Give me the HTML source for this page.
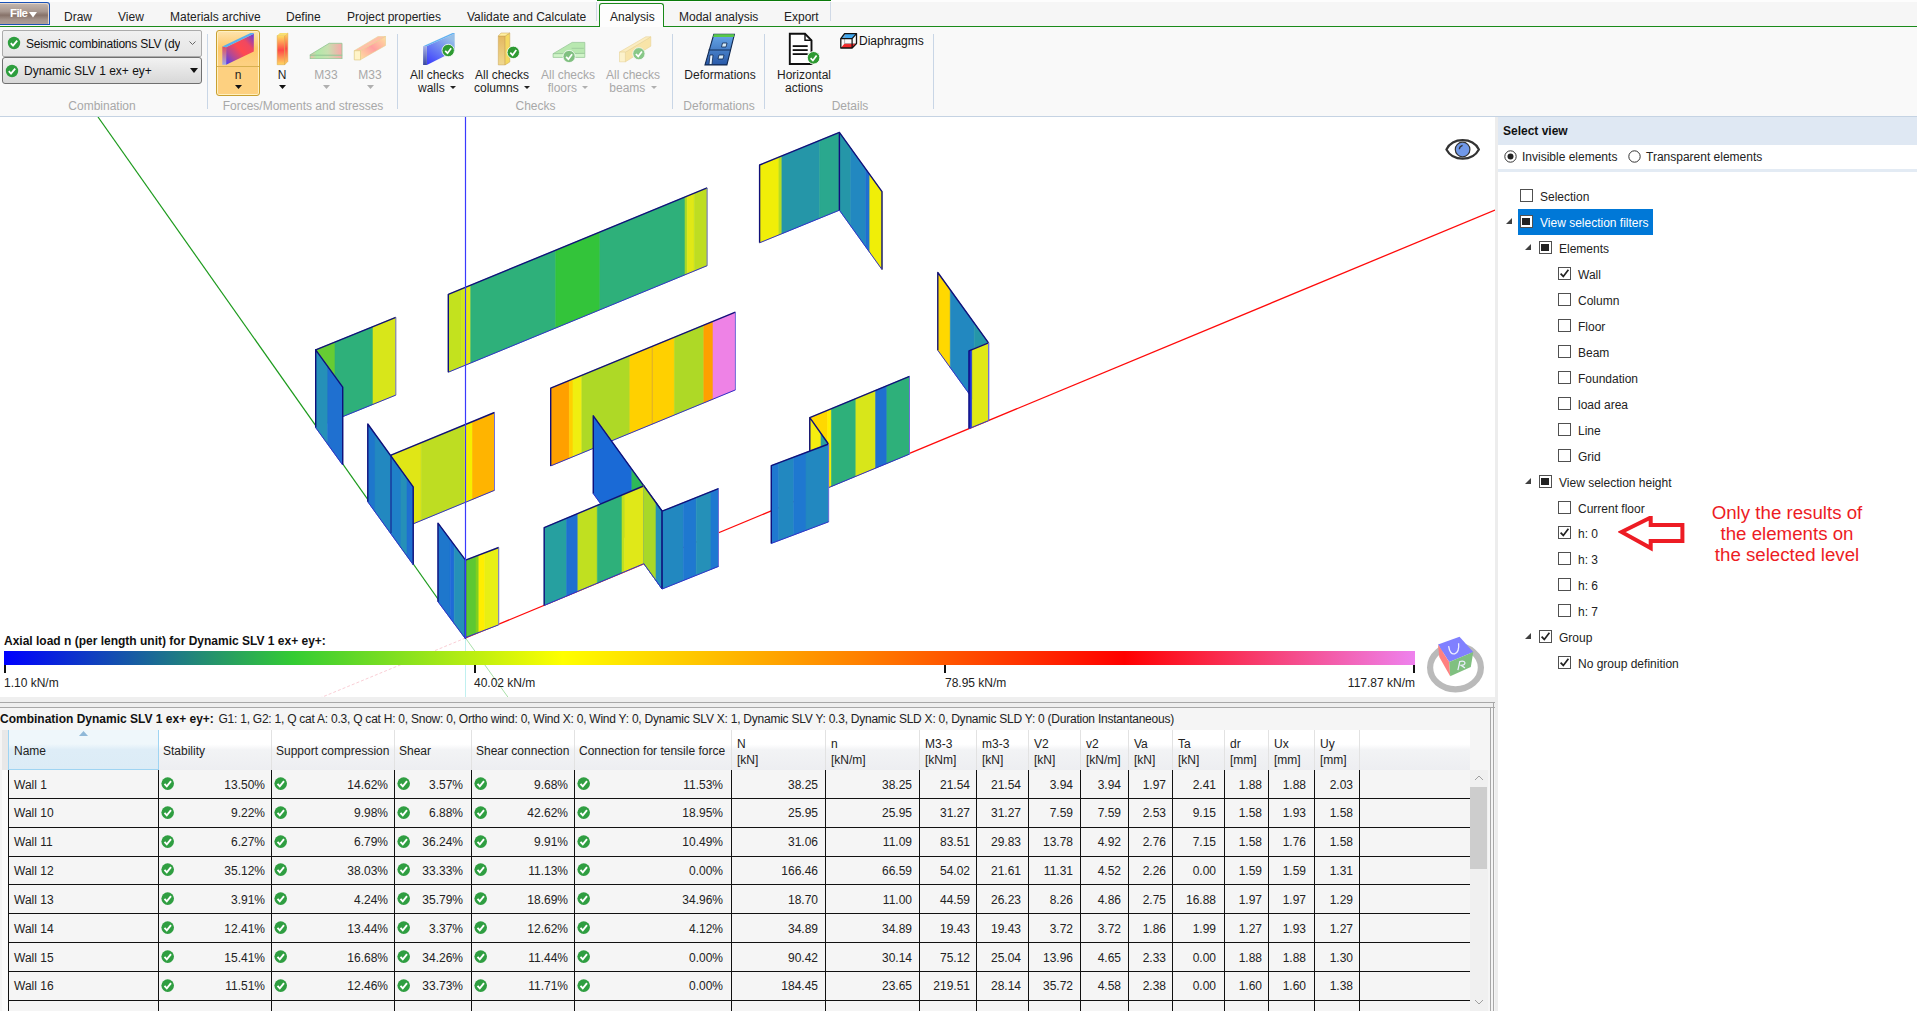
<!DOCTYPE html>
<html><head><meta charset="utf-8">
<style>
*{box-sizing:border-box;margin:0;padding:0}
html,body{width:1917px;height:1011px;overflow:hidden;background:#fff;font-family:"Liberation Sans",sans-serif;font-size:12px;color:#1e1e1e}
.a{position:absolute;white-space:nowrap}
#tabs{position:absolute;left:0;top:0;width:1917px;height:27px;background:#f6f6f6}
#ribbon{position:absolute;left:0;top:27px;width:1917px;height:90px;background:#f9f9f9;border-bottom:1px solid #c5d3e3}
.tab{position:absolute;top:10px;font-size:12px;color:#222}
.sep{position:absolute;width:1px;background:#c9d6e6}
.glabel{position:absolute;top:99px;font-size:12px;color:#a8a8a8;text-align:center}
.btxt{position:absolute;font-size:12px;text-align:center;line-height:13px;color:#1e1e1e}
.dis{color:#a8a8a8}
.arr{display:inline-block;width:0;height:0;border-left:3px solid transparent;border-right:3px solid transparent;border-top:3px solid #222;vertical-align:middle;margin-left:2px}
#view{position:absolute;left:0;top:117px;width:1495px;height:580px;background:#fff;overflow:hidden}
#split{position:absolute;left:1495px;top:117px;width:3px;height:894px;background:#ededed}
#panel{position:absolute;left:1498px;top:117px;width:419px;height:894px;background:#fff}
#tbl{position:absolute;left:0;top:697px;width:1495px;height:314px;background:#efefef}
.cb{position:absolute;width:13px;height:13px;border:1px solid #333;background:#fff}
.tri{position:absolute;width:0;height:0;border-left:7px solid transparent;border-bottom:7px solid #444}
</style></head><body>
<div id="tabs">
  <div class="a" style="left:0;top:0;width:1917px;height:2px;background:#fdfdfd"></div>
  <div class="a" style="left:0;top:2px;width:50px;height:23px;border:1px solid #1a52b8;border-left:none;border-radius:0 3px 0 0;background:linear-gradient(#c6b8b0 0%,#a89890 40%,#87736a 58%,#a4948c 80%,#b0a098 100%);box-shadow:inset -1px 1px 0 #e6d8cc"></div>
  <div class="a" style="left:10px;top:7px;font-size:11.5px;font-weight:bold;color:#fff;letter-spacing:-0.6px">File</div>
  <svg class="a" style="left:29px;top:12px" width="8" height="6"><path d="M0 0 L8 0 L4 5.5z" fill="#fff"/></svg>
  <div class="tab" style="left:64px">Draw</div>
  <div class="tab" style="left:118px">View</div>
  <div class="tab" style="left:170px">Materials archive</div>
  <div class="tab" style="left:286px">Define</div>
  <div class="tab" style="left:347px">Project properties</div>
  <div class="tab" style="left:467px">Validate and Calculate</div>
  <div class="a" style="left:597px;top:0;width:234px;height:1px;background:#0a7a0a"></div>
  <div class="a" style="left:596px;top:2px;width:1px;height:19px;background:#d0d9e6"></div>
  <div class="a" style="left:830px;top:2px;width:1px;height:19px;background:#d0d9e6"></div>
  <div class="a" style="left:599px;top:3px;width:65px;height:25px;background:#fdfdfd;border:1px solid #1a8a1a;border-bottom:none;border-radius:3px 3px 0 0"></div>
  <div class="tab" style="left:610px">Analysis</div>
  <div class="tab" style="left:679px">Modal analysis</div>
  <div class="tab" style="left:784px">Export</div>
  <div class="a" style="left:0;top:26px;width:599px;height:1px;background:#1a8a1a"></div>
  <div class="a" style="left:663px;top:26px;width:1254px;height:1px;background:#1a8a1a"></div>
</div>
<div id="ribbon">
  <!-- combination dropdowns -->
  <div class="a" style="left:2px;top:3px;width:200px;height:27px;border:1px solid #ababab;border-radius:2px;background:linear-gradient(#f0f0f0,#e5e5e5)"></div>
  <div class="a" style="left:2px;top:30px;width:200px;height:27px;border:1px solid #707070;border-radius:3px;background:linear-gradient(#f2f2f2,#d8d8d8)"></div>
  <svg class="a" style="left:7px;top:9px" width="14" height="14"><circle cx="7" cy="7" r="6.2" fill="#2e9e3e"/><path d="M3.8 7.2 L6 9.6 L10.2 4.6" stroke="#fff" stroke-width="1.8" fill="none"/></svg>
  <div class="a" style="left:26px;top:10px;width:154px;overflow:hidden;font-size:12px;letter-spacing:-0.25px;color:#111">Seismic combinations SLV (dy</div>
  <svg class="a" style="left:189px;top:14px" width="7" height="5"><path d="M0.5 0.5 L3.5 3.5 L6.5 0.5" stroke="#666" fill="none"/></svg>
  <svg class="a" style="left:5px;top:37px" width="14" height="14"><circle cx="7" cy="7" r="6.2" fill="#2e9e3e"/><path d="M3.8 7.2 L6 9.6 L10.2 4.6" stroke="#fff" stroke-width="1.8" fill="none"/></svg>
  <div class="a" style="left:24px;top:37px;font-size:12px;color:#111">Dynamic SLV 1 ex+ ey+</div>
  <svg class="a" style="left:190px;top:41px" width="8" height="5"><path d="M0 0 L8 0 L4 5z" fill="#111"/></svg>
  <div class="glabel" style="left:2px;top:72px;width:200px">Combination</div>
  <div class="sep" style="left:207px;top:7px;height:75px"></div>

  <!-- n button -->
  <div class="a" style="left:216px;top:3px;width:44px;height:66px;border:1px solid #c9a030;border-radius:3px;box-shadow:inset 0 0 0 1px #fff0c0;background:linear-gradient(#fde4b0 0%,#fec868 27%,#fdd080 50%,#fdd080 100%)"></div>
  <div class="a" style="left:217px;top:39px;width:42px;height:1px;background:#d8b050"></div>
  <svg class="a" style="left:221px;top:5px" width="34" height="34">
    <defs><linearGradient id="gn" x1="0" y1="1" x2="1" y2="0"><stop offset="0" stop-color="#4a3cf8"/><stop offset="0.25" stop-color="#b04898"/><stop offset="0.5" stop-color="#ff4850"/><stop offset="0.72" stop-color="#f04860"/><stop offset="1" stop-color="#5a3ce8"/></linearGradient>
    <linearGradient id="gnl" x1="0" y1="0" x2="0" y2="1"><stop offset="0" stop-color="#e05060"/><stop offset="1" stop-color="#a0a8e8"/></linearGradient></defs>
    <polygon points="5.1,15.2 32.8,1.8 32.8,19.4 5.1,32.7" fill="url(#gn)"/>
    <polygon points="1.3,14.4 5.1,15.2 5.1,32.7 1.3,32.7" fill="url(#gnl)"/>
    <polygon points="1.3,14.4 29.5,1 32.8,1 32.8,1.8 5.1,15.2" fill="#58b0f0"/>
  </svg>
  <div class="btxt" style="left:216px;top:42px;width:44px">n</div>
  <svg class="a" style="left:235px;top:58px" width="7" height="4"><path d="M0 0 L7 0 L3.5 4z" fill="#111"/></svg>
  <!-- N -->
  <svg class="a" style="left:276px;top:5px" width="14" height="34">
    <defs><linearGradient id="gN" x1="0" y1="0" x2="0" y2="1"><stop offset="0" stop-color="#ffe060"/><stop offset="0.5" stop-color="#ff4848"/><stop offset="1" stop-color="#ffd860"/></linearGradient></defs>
    <polygon points="1.2,3.5 8.7,3.5 8.7,32.7 1.2,32.7" fill="url(#gN)" stroke="#d8a040" stroke-width="0.5"/>
    <polygon points="8.7,3.5 11.8,1 11.8,29.5 8.7,32.7" fill="url(#gN)" stroke="#d8a040" stroke-width="0.5"/>
    <polygon points="1.2,3.5 4,1 11.8,1 8.7,3.5" fill="#f8e070"/>
  </svg>
  <div class="btxt" style="left:262px;top:42px;width:40px">N</div>
  <svg class="a" style="left:279px;top:58px" width="7" height="4"><path d="M0 0 L7 0 L3.5 4z" fill="#111"/></svg>
  <!-- M33 slab -->
  <svg class="a" style="left:309px;top:14px" width="34" height="18">
    <defs><linearGradient id="gm1" x1="0" y1="0" x2="1" y2="0"><stop offset="0" stop-color="#f0b8a8"/><stop offset="0.2" stop-color="#b0e8a8"/><stop offset="0.55" stop-color="#c8e0b0"/><stop offset="1" stop-color="#f8a8a8"/></linearGradient></defs>
    <polygon points="1.2,13.8 20.2,2.3 33,2.3 33,14.3 1.2,14.3" fill="url(#gm1)" stroke="#98c898" stroke-width="0.9"/>
    <rect x="1.2" y="14.3" width="31.8" height="3.4" fill="url(#gm1)" stroke="#98c898" stroke-width="0.9"/>
  </svg>
  <div class="btxt dis" style="left:306px;top:42px;width:40px">M33</div>
  <svg class="a" style="left:323px;top:58px" width="7" height="4"><path d="M0 0 L7 0 L3.5 4z" fill="#b0b0b0"/></svg>
  <!-- M33 beam -->
  <svg class="a" style="left:353px;top:9px" width="34" height="26">
    <defs><linearGradient id="gm2" x1="0" y1="1" x2="1" y2="0"><stop offset="0" stop-color="#ffe0a0"/><stop offset="0.5" stop-color="#ffa0a0"/><stop offset="1" stop-color="#ffe0a0"/></linearGradient></defs>
    <polygon points="7.5,23.7 32.5,9.5 32.5,0.4 7.5,14.7" fill="url(#gm2)" stroke="#e8d090" stroke-width="0.6"/>
    <polygon points="1.3,14.7 25.2,0.4 32.5,0.4 7.5,14.7" fill="#ffc0a8" stroke="#e8d090" stroke-width="0.6"/>
    <polygon points="1.3,14.7 7.5,14.7 7.5,23.9 1.3,23.9" fill="#fff4c8" stroke="#e0c880" stroke-width="0.7"/>
  </svg>
  <div class="btxt dis" style="left:350px;top:42px;width:40px">M33</div>
  <svg class="a" style="left:367px;top:58px" width="7" height="4"><path d="M0 0 L7 0 L3.5 4z" fill="#b0b0b0"/></svg>
  <div class="glabel" style="left:208px;top:72px;width:190px">Forces/Moments and stresses</div>
  <div class="sep" style="left:397px;top:7px;height:75px"></div>

  <!-- checks -->
  <svg class="a" style="left:422px;top:5px" width="36" height="34">
    <defs><linearGradient id="gw" x1="0" y1="1" x2="0.6" y2="0"><stop offset="0" stop-color="#3838ff"/><stop offset="1" stop-color="#98c0e8"/></linearGradient>
    <linearGradient id="gwl" x1="0" y1="0" x2="0" y2="1"><stop offset="0" stop-color="#a8b0e8"/><stop offset="1" stop-color="#3848a0"/></linearGradient></defs>
    <polygon points="4.9,14 32.7,1.6 32.7,19 4.9,32.9" fill="url(#gw)"/>
    <polygon points="1.1,14.2 4.9,14 4.9,32.9 1.1,32.9" fill="url(#gwl)"/>
    <polygon points="1.1,14.2 30.5,1 32.7,1 32.7,1.6 4.9,14" fill="#60b0f0"/>
    <circle cx="26.2" cy="18.5" r="6.2" fill="#2e9a32" stroke="#fff" stroke-width="0.8"/><path d="M23.2 18.8 L25.5 21.2 L29.2 16.2" stroke="#fff" stroke-width="1.7" fill="none"/>
  </svg>
  <div class="btxt" style="left:405px;top:42px;width:64px">All checks<br>walls <span class="arr" style="margin-top:-2px"></span></div>
  <svg class="a" style="left:496px;top:5px" width="30" height="34">
    <defs><linearGradient id="gc" x1="0" y1="0" x2="0" y2="1"><stop offset="0" stop-color="#e4b860"/><stop offset="1" stop-color="#f0d890"/></linearGradient></defs>
    <polygon points="2.3,4 9.1,4 9.1,32.9 2.3,32.9" fill="url(#gc)" stroke="#c8a050" stroke-width="0.5"/>
    <polygon points="9.1,4 13.8,1 13.8,30 9.1,32.9" fill="#f4d860" stroke="#c8a050" stroke-width="0.5"/>
    <polygon points="2.3,4 5,1 13.8,1 9.1,4" fill="#fff0a0" stroke="#c8a050" stroke-width="0.5"/>
    <circle cx="17.3" cy="20.4" r="6.2" fill="#2e9a32" stroke="#fff" stroke-width="0.8"/><path d="M14.3 20.7 L16.6 23.1 L20.3 18.1" stroke="#fff" stroke-width="1.7" fill="none"/>
  </svg>
  <div class="btxt" style="left:470px;top:42px;width:64px">All checks<br>columns <span class="arr" style="margin-top:-2px"></span></div>
  <svg class="a" style="left:552px;top:5px" width="36" height="34">
    <polygon points="1.1,21.7 20.2,10.4 32.8,10.4 32.8,21.4" fill="#b8e8b0" stroke="#98c898" stroke-width="0.8"/>
    <polygon points="1.1,21.7 32.8,21.4 32.8,25.4 1.1,25.4" fill="#d0f4c8" stroke="#98c898" stroke-width="0.8"/>
    <line x1="19.6" y1="16.3" x2="31.8" y2="16.3" stroke="#98c098" stroke-width="0.7"/>
    <circle cx="17.1" cy="24.5" r="6.1" fill="#80c080" stroke="#f8f8f8" stroke-width="0.8"/><path d="M14.1 24.8 L16.4 27.2 L20.1 22.2" stroke="#fff" stroke-width="1.7" fill="none"/>
  </svg>
  <div class="btxt dis" style="left:536px;top:42px;width:64px">All checks<br>floors <span class="arr" style="margin-top:-2px;border-top-color:#b0b0b0"></span></div>
  <svg class="a" style="left:617px;top:5px" width="36" height="34">
    <polygon points="8.4,20.1 33.8,4.8 33.8,14.2 8.4,29.8" fill="#f8e4a8" stroke="#e8d498" stroke-width="0.6"/>
    <polygon points="2.5,20.1 28.8,4.8 33.8,4.8 8.4,20.1" fill="#fbecc0" stroke="#e8d498" stroke-width="0.6"/>
    <polygon points="2.5,20.1 8.4,20.1 8.4,29.8 2.5,29.8" fill="#fcf2cc" stroke="#e8d498" stroke-width="0.6"/>
    <circle cx="21.9" cy="21.7" r="6.1" fill="#88c888" stroke="#f8f8f8" stroke-width="0.8"/><path d="M18.9 22 L21.2 24.4 L24.9 19.4" stroke="#fff" stroke-width="1.7" fill="none"/>
  </svg>
  <div class="btxt dis" style="left:601px;top:42px;width:64px">All checks<br>beams <span class="arr" style="margin-top:-2px;border-top-color:#b0b0b0"></span></div>
  <div class="glabel" style="left:398px;top:72px;width:275px">Checks</div>
  <div class="sep" style="left:672px;top:7px;height:75px"></div>

  <!-- deformations -->
  <svg class="a" style="left:704px;top:5px" width="34" height="34">
    <defs><linearGradient id="gd" x1="0" y1="0" x2="0" y2="1"><stop offset="0" stop-color="#68a8e8"/><stop offset="1" stop-color="#2858a8"/></linearGradient></defs>
    <polygon points="9.8,2.3 30.4,2.3 22.9,32.9 1,32.9" fill="url(#gd)" stroke="#102850" stroke-width="1.1"/>
    <polygon points="9.8,2.3 30.4,2.3 29.7,5 9.1,5" fill="#58c848"/>
    <line x1="4.5" y1="18" x2="27" y2="18" stroke="#102850" stroke-width="0.9"/>
    <polygon points="18.5,11 23,11 22,15 17.5,15" fill="#d8ecf8" stroke="#102850" stroke-width="0.8"/>
    <polygon points="15,23 20,23 19,27 14,27" fill="#d8ecf8" stroke="#102850" stroke-width="0.8"/>
    <polygon points="6,23 9,23 8,32.5 5,32.5" fill="#e8f4ff" stroke="#102850" stroke-width="0.8"/>
  </svg>
  <div class="btxt" style="left:680px;top:42px;width:80px">Deformations</div>
  <div class="glabel" style="left:673px;top:72px;width:92px">Deformations</div>
  <div class="sep" style="left:764px;top:7px;height:75px"></div>

  <!-- horizontal actions -->
  <svg class="a" style="left:788px;top:5px" width="34" height="34">
    <path d="M1.8 1.8 L17 1.8 L23.5 8.3 L23.5 32 L1.8 32 Z" fill="#fff" stroke="#111" stroke-width="1.9"/>
    <path d="M17 1.8 L17 8.3 L23.5 8.3" fill="none" stroke="#111" stroke-width="1.4"/>
    <rect x="4.7" y="13.2" width="15" height="1.8" fill="#111"/><rect x="4.7" y="17.2" width="15" height="1.8" fill="#111"/><rect x="4.7" y="21.2" width="15" height="1.8" fill="#111"/>
    <circle cx="25.6" cy="25.8" r="6.3" fill="#2e9a32" stroke="#fff" stroke-width="0.9"/><path d="M22.6 26.1 L24.9 28.5 L28.6 23.5" stroke="#fff" stroke-width="1.7" fill="none"/>
  </svg>
  <div class="btxt" style="left:770px;top:42px;width:68px">Horizontal<br>actions</div>
  <svg class="a" style="left:839px;top:5px" width="20" height="18">
    <polygon points="5.6,1.6 17.5,1.6 13.1,6.6 1.8,6.6" fill="#40a8f0"/>
    <polygon points="5.6,11.6 17.5,11.6 13.1,16 1.8,16" fill="#f02828"/>
    <line x1="5.6" y1="1.6" x2="5.6" y2="11.6" stroke="#a0a0a0" stroke-width="0.8"/>
    <line x1="5.6" y1="11.6" x2="17.5" y2="11.6" stroke="#a0a0a0" stroke-width="0.8"/>
    <path d="M1.8 6.6 L5.6 1.6 L17.5 1.6 L17.5 11.6 L13.1 16 L1.8 16 Z" fill="none" stroke="#111" stroke-width="1.3" stroke-linejoin="round"/>
    <path d="M1.8 6.6 L13.1 6.6 L17.5 1.6 M13.1 6.6 L13.1 16" fill="none" stroke="#111" stroke-width="1.2"/>
  </svg>
  <div class="a" style="left:859px;top:7px;font-size:12px;color:#111">Diaphragms</div>
  <div class="glabel" style="left:765px;top:72px;width:170px">Details</div>
  <div class="sep" style="left:933px;top:7px;height:75px"></div>
</div>
<div id="view">
<svg class="a" style="left:0;top:0" width="1495" height="580">
<line x1="98" y1="0" x2="465.5" y2="521.0" stroke="#1c9a1c" stroke-width="1.2"/>
<line x1="465.5" y1="521.0" x2="1495" y2="93.0" stroke="#ff0a0a" stroke-width="1.3"/>
<line x1="465.5" y1="521.0" x2="510" y2="583.0" stroke="#a8e0a8" stroke-width="1"/>
<line x1="465.5" y1="521.0" x2="320" y2="581.0" stroke="#f8c8d0" stroke-width="0.9" stroke-dasharray="3,2"/>
<line x1="465.5" y1="521.0" x2="465.5" y2="583.0" stroke="#c0f0f0" stroke-width="1"/>
<polygon points="759.6,48.0 778.9,40.1 778.9,117.9 759.6,125.8" fill="#f0ee08" stroke="#f0ee08" stroke-width="0.6"/>
<polygon points="778.9,40.1 781.9,38.9 781.9,116.7 778.9,117.9" fill="#b4dc24" stroke="#b4dc24" stroke-width="0.6"/>
<polygon points="781.9,38.9 819.7,23.4 819.7,101.2 781.9,116.7" fill="#2596a8" stroke="#2596a8" stroke-width="0.6"/>
<polygon points="819.7,23.4 839.4,15.4 839.4,93.2 819.7,101.2" fill="#2aa88e" stroke="#2aa88e" stroke-width="0.6"/>
<polyline points="759.6,125.8 759.6,48.0 839.4,15.4" fill="none" stroke="#10107a" stroke-width="1.4" stroke-linejoin="round"/>
<line x1="839.4" y1="15.4" x2="839.4" y2="93.2" stroke="#7070d8" stroke-width="1"/>
<line x1="759.6" y1="125.8" x2="839.4" y2="93.2" stroke="#3030c8" stroke-width="1"/>
<polygon points="839.4,15.4 850.8,31.3 850.8,109.1 839.4,93.2" fill="#2596a8" stroke="#2596a8" stroke-width="0.6"/>
<polygon points="850.8,31.3 865.7,52.0 865.7,129.8 850.8,109.1" fill="#2288c0" stroke="#2288c0" stroke-width="0.6"/>
<polygon points="865.7,52.0 869.8,57.7 869.8,135.5 865.7,129.8" fill="#1f70d0" stroke="#1f70d0" stroke-width="0.6"/>
<polygon points="869.8,57.7 882.0,74.7 882.0,152.5 869.8,135.5" fill="#f0ee08" stroke="#f0ee08" stroke-width="0.6"/>
<polyline points="839.4,93.2 839.4,15.4 882.0,74.7 882.0,152.5" fill="none" stroke="#10107a" stroke-width="1.4" stroke-linejoin="round"/>
<line x1="839.4" y1="93.2" x2="882.0" y2="152.5" stroke="#3030c8" stroke-width="1"/>
<polygon points="448.3,177.4 461.8,171.8 461.8,249.6 448.3,255.2" fill="#c3e21e" stroke="#c3e21e" stroke-width="0.6"/>
<polygon points="461.8,171.8 464.7,170.7 464.7,248.5 461.8,249.6" fill="#d0e818" stroke="#d0e818" stroke-width="0.6"/>
<polygon points="464.7,170.7 470.7,168.2 470.7,246.0 464.7,248.5" fill="#e3e812" stroke="#e3e812" stroke-width="0.6"/>
<polygon points="470.7,168.2 555.7,133.2 555.7,211.0 470.7,246.0" fill="#2eb07a" stroke="#2eb07a" stroke-width="0.6"/>
<polygon points="555.7,133.2 599.9,115.0 599.9,192.8 555.7,211.0" fill="#33c43a" stroke="#33c43a" stroke-width="0.6"/>
<polygon points="599.9,115.0 685.0,80.0 685.0,157.8 599.9,192.8" fill="#2eb07a" stroke="#2eb07a" stroke-width="0.6"/>
<polygon points="685.0,80.0 687.3,79.0 687.3,156.8 685.0,157.8" fill="#a8d828" stroke="#a8d828" stroke-width="0.6"/>
<polygon points="687.3,79.0 694.3,76.2 694.3,154.0 687.3,156.8" fill="#e0e816" stroke="#e0e816" stroke-width="0.6"/>
<polygon points="694.3,76.2 707.1,70.9 707.1,148.7 694.3,154.0" fill="#bedd22" stroke="#bedd22" stroke-width="0.6"/>
<polyline points="448.3,255.2 448.3,177.4 707.1,70.9" fill="none" stroke="#10107a" stroke-width="1.4" stroke-linejoin="round"/>
<line x1="707.1" y1="70.9" x2="707.1" y2="148.7" stroke="#7070d8" stroke-width="1"/>
<line x1="448.3" y1="255.2" x2="707.1" y2="148.7" stroke="#3030c8" stroke-width="1"/>
<polygon points="315.7,232.8 335.0,225.0 335.0,302.8 315.7,310.6" fill="#66cc33" stroke="#66cc33" stroke-width="0.6"/>
<polygon points="335.0,225.0 373.0,209.6 373.0,287.4 335.0,302.8" fill="#2eb07a" stroke="#2eb07a" stroke-width="0.6"/>
<polygon points="373.0,209.6 395.8,200.3 395.8,278.1 373.0,287.4" fill="#d8e61a" stroke="#d8e61a" stroke-width="0.6"/>
<polyline points="315.7,310.6 315.7,232.8 395.8,200.3" fill="none" stroke="#10107a" stroke-width="1.4" stroke-linejoin="round"/>
<line x1="395.8" y1="200.3" x2="395.8" y2="278.1" stroke="#7070d8" stroke-width="1"/>
<line x1="315.7" y1="310.6" x2="395.8" y2="278.1" stroke="#3030c8" stroke-width="1"/>
<polygon points="315.7,232.8 327.6,249.3 327.6,327.1 315.7,310.6" fill="#2590b8" stroke="#2590b8" stroke-width="0.6"/>
<polygon points="327.6,249.3 342.7,270.2 342.7,348.0 327.6,327.1" fill="#1f70d0" stroke="#1f70d0" stroke-width="0.6"/>
<polyline points="315.7,310.6 315.7,232.8 342.7,270.2 342.7,348.0" fill="none" stroke="#10107a" stroke-width="1.4" stroke-linejoin="round"/>
<line x1="315.7" y1="310.6" x2="342.7" y2="348.0" stroke="#3030c8" stroke-width="1"/>
<polygon points="937.8,155.5 950.3,172.8 950.3,250.6 937.8,233.3" fill="#ffd800" stroke="#ffd800" stroke-width="0.6"/>
<polygon points="950.3,172.8 974.3,206.1 974.3,283.9 950.3,250.6" fill="#2288c0" stroke="#2288c0" stroke-width="0.6"/>
<polygon points="974.3,206.1 988.5,225.8 988.5,303.6 974.3,283.9" fill="#2596a8" stroke="#2596a8" stroke-width="0.6"/>
<polyline points="937.8,233.3 937.8,155.5 988.5,225.8 988.5,303.6" fill="none" stroke="#10107a" stroke-width="1.4" stroke-linejoin="round"/>
<line x1="937.8" y1="233.3" x2="988.5" y2="303.6" stroke="#3030c8" stroke-width="1"/>
<polygon points="969.0,233.8 972.2,232.5 972.2,310.3 969.0,311.6" fill="#1a30e0" stroke="#1a30e0" stroke-width="0.6"/>
<polygon points="972.2,232.5 988.5,225.8 988.5,303.6 972.2,310.3" fill="#e0e816" stroke="#e0e816" stroke-width="0.6"/>
<polyline points="969.0,311.6 969.0,233.8 988.5,225.8" fill="none" stroke="#10107a" stroke-width="1.4" stroke-linejoin="round"/>
<line x1="988.5" y1="225.8" x2="988.5" y2="303.6" stroke="#7070d8" stroke-width="1"/>
<line x1="969.0" y1="311.6" x2="988.5" y2="303.6" stroke="#3030c8" stroke-width="1"/>
<polygon points="550.7,271.1 569.4,263.4 569.4,341.2 550.7,348.9" fill="#ffa000" stroke="#ffa000" stroke-width="0.6"/>
<polygon points="569.4,263.4 573.0,261.9 573.0,339.7 569.4,341.2" fill="#ffd000" stroke="#ffd000" stroke-width="0.6"/>
<polygon points="573.0,261.9 581.8,258.3 581.8,336.1 573.0,339.7" fill="#f0ee10" stroke="#f0ee10" stroke-width="0.6"/>
<polygon points="581.8,258.3 629.9,238.5 629.9,316.3 581.8,336.1" fill="#aed926" stroke="#aed926" stroke-width="0.6"/>
<polygon points="629.9,238.5 652.1,229.4 652.1,307.2 629.9,316.3" fill="#ffd000" stroke="#ffd000" stroke-width="0.6"/>
<polygon points="652.1,229.4 653.0,229.0 653.0,306.8 652.1,307.2" fill="#d8a830" stroke="#d8a830" stroke-width="0.6"/>
<polygon points="653.0,229.0 674.4,220.2 674.4,298.0 653.0,306.8" fill="#ffd000" stroke="#ffd000" stroke-width="0.6"/>
<polygon points="674.4,220.2 703.8,208.1 703.8,285.9 674.4,298.0" fill="#aed926" stroke="#aed926" stroke-width="0.6"/>
<polygon points="703.8,208.1 713.0,204.3 713.0,282.1 703.8,285.9" fill="#ffa000" stroke="#ffa000" stroke-width="0.6"/>
<polygon points="713.0,204.3 735.4,195.1 735.4,272.9 713.0,282.1" fill="#ee82e6" stroke="#ee82e6" stroke-width="0.6"/>
<polyline points="550.7,348.9 550.7,271.1 735.4,195.1" fill="none" stroke="#10107a" stroke-width="1.4" stroke-linejoin="round"/>
<line x1="735.4" y1="195.1" x2="735.4" y2="272.9" stroke="#7070d8" stroke-width="1"/>
<line x1="550.7" y1="348.9" x2="735.4" y2="272.9" stroke="#3030c8" stroke-width="1"/>
<polygon points="391.0,338.2 421.2,325.7 421.2,403.5 391.0,416.0" fill="#e0e616" stroke="#e0e616" stroke-width="0.6"/>
<polygon points="421.2,325.7 464.8,307.8 464.8,385.6 421.2,403.5" fill="#bedd22" stroke="#bedd22" stroke-width="0.6"/>
<polygon points="464.8,307.8 472.5,304.6 472.5,382.4 464.8,385.6" fill="#f5ef00" stroke="#f5ef00" stroke-width="0.6"/>
<polygon points="472.5,304.6 494.5,295.5 494.5,373.3 472.5,382.4" fill="#ffb400" stroke="#ffb400" stroke-width="0.6"/>
<polyline points="391.0,416.0 391.0,338.2 494.5,295.5" fill="none" stroke="#10107a" stroke-width="1.4" stroke-linejoin="round"/>
<line x1="494.5" y1="295.5" x2="494.5" y2="373.3" stroke="#7070d8" stroke-width="1"/>
<line x1="391.0" y1="416.0" x2="494.5" y2="373.3" stroke="#3030c8" stroke-width="1"/>
<polygon points="367.8,307.0 375.0,317.0 375.0,394.8 367.8,384.8" fill="#1e77cc" stroke="#1e77cc" stroke-width="0.6"/>
<polygon points="375.0,317.0 391.0,339.1 391.0,416.9 375.0,394.8" fill="#2288c0" stroke="#2288c0" stroke-width="0.6"/>
<polygon points="391.0,339.1 401.0,353.0 401.0,430.8 391.0,416.9" fill="#1f80c8" stroke="#1f80c8" stroke-width="0.6"/>
<polygon points="401.0,353.0 407.0,361.3 407.0,439.1 401.0,430.8" fill="#2590b8" stroke="#2590b8" stroke-width="0.6"/>
<polygon points="407.0,361.3 413.2,369.9 413.2,447.7 407.0,439.1" fill="#1f70d0" stroke="#1f70d0" stroke-width="0.6"/>
<polyline points="367.8,384.8 367.8,307.0 413.2,369.9 413.2,447.7" fill="none" stroke="#10107a" stroke-width="1.4" stroke-linejoin="round"/>
<line x1="367.8" y1="384.8" x2="413.2" y2="447.7" stroke="#3030c8" stroke-width="1"/>
<line x1="391" y1="338.2" x2="391" y2="416.0" stroke="#14148a" stroke-width="1"/>
<polygon points="809.8,300.6 827.7,293.2 827.7,371.0 809.8,378.4" fill="#ffd800" stroke="#ffd800" stroke-width="0.6"/>
<polygon points="827.7,293.2 831.4,291.7 831.4,369.5 827.7,371.0" fill="#fff000" stroke="#fff000" stroke-width="0.6"/>
<polygon points="831.4,291.7 855.9,281.5 855.9,359.3 831.4,369.5" fill="#2eb07a" stroke="#2eb07a" stroke-width="0.6"/>
<polygon points="855.9,281.5 875.6,273.3 875.6,351.1 855.9,359.3" fill="#d8e61a" stroke="#d8e61a" stroke-width="0.6"/>
<polygon points="875.6,273.3 886.9,268.7 886.9,346.5 875.6,351.1" fill="#1f70d0" stroke="#1f70d0" stroke-width="0.6"/>
<polygon points="886.9,268.7 909.5,259.3 909.5,337.1 886.9,346.5" fill="#2eb07a" stroke="#2eb07a" stroke-width="0.6"/>
<polyline points="809.8,378.4 809.8,300.6 909.5,259.3" fill="none" stroke="#10107a" stroke-width="1.4" stroke-linejoin="round"/>
<line x1="909.5" y1="259.3" x2="909.5" y2="337.1" stroke="#7070d8" stroke-width="1"/>
<line x1="809.8" y1="378.4" x2="909.5" y2="337.1" stroke="#3030c8" stroke-width="1"/>
<polygon points="809.8,300.6 821.0,316.5 821.0,394.3 809.8,378.4" fill="#f5ee10" stroke="#f5ee10" stroke-width="0.6"/>
<polygon points="821.0,316.5 827.7,326.0 827.7,403.8 821.0,394.3" fill="#2aa0a0" stroke="#2aa0a0" stroke-width="0.6"/>
<polyline points="809.8,378.4 809.8,300.6 827.7,326.0 827.7,403.8" fill="none" stroke="#10107a" stroke-width="1.4" stroke-linejoin="round"/>
<line x1="809.8" y1="378.4" x2="827.7" y2="403.8" stroke="#3030c8" stroke-width="1"/>
<polygon points="771.3,348.6 778.8,345.8 778.8,423.6 771.3,426.4" fill="#1f78d0" stroke="#1f78d0" stroke-width="0.6"/>
<polygon points="778.8,345.8 793.8,340.1 793.8,417.9 778.8,423.6" fill="#2288c0" stroke="#2288c0" stroke-width="0.6"/>
<polygon points="793.8,340.1 806.0,335.5 806.0,413.3 793.8,417.9" fill="#1f78d0" stroke="#1f78d0" stroke-width="0.6"/>
<polygon points="806.0,335.5 828.6,327.0 828.6,404.8 806.0,413.3" fill="#2288c0" stroke="#2288c0" stroke-width="0.6"/>
<polyline points="771.3,426.4 771.3,348.6 828.6,327.0" fill="none" stroke="#10107a" stroke-width="1.4" stroke-linejoin="round"/>
<line x1="828.6" y1="327.0" x2="828.6" y2="404.8" stroke="#7070d8" stroke-width="1"/>
<line x1="771.3" y1="426.4" x2="828.6" y2="404.8" stroke="#3030c8" stroke-width="1"/>
<polygon points="593.3,298.8 631.9,352.3 631.9,430.1 593.3,376.6" fill="#1a6ad6" stroke="#1a6ad6" stroke-width="0.6"/>
<polygon points="631.9,352.3 643.2,368.0 643.2,445.8 631.9,430.1" fill="#2eba58" stroke="#2eba58" stroke-width="0.6"/>
<polygon points="643.2,368.0 656.0,385.7 656.0,463.5 643.2,445.8" fill="#a8d828" stroke="#a8d828" stroke-width="0.6"/>
<polygon points="656.0,385.7 662.1,394.2 662.1,472.0 656.0,463.5" fill="#2590b8" stroke="#2590b8" stroke-width="0.6"/>
<polyline points="593.3,376.6 593.3,298.8 662.1,394.2 662.1,472.0" fill="none" stroke="#10107a" stroke-width="1.4" stroke-linejoin="round"/>
<line x1="593.3" y1="376.6" x2="662.1" y2="472.0" stroke="#3030c8" stroke-width="1"/>
<polygon points="544.2,410.6 566.6,401.2 566.6,479.0 544.2,488.4" fill="#26a0a0" stroke="#26a0a0" stroke-width="0.6"/>
<polygon points="566.6,401.2 577.9,396.5 577.9,474.3 566.6,479.0" fill="#1f70d0" stroke="#1f70d0" stroke-width="0.6"/>
<polygon points="577.9,396.5 597.3,388.4 597.3,466.2 577.9,474.3" fill="#c0e020" stroke="#c0e020" stroke-width="0.6"/>
<polygon points="597.3,388.4 622.0,378.0 622.0,455.8 597.3,466.2" fill="#2eb07a" stroke="#2eb07a" stroke-width="0.6"/>
<polygon points="622.0,378.0 624.6,376.9 624.6,454.7 622.0,455.8" fill="#c0e020" stroke="#c0e020" stroke-width="0.6"/>
<polygon points="624.6,376.9 643.5,369.0 643.5,446.8 624.6,454.7" fill="#e0e818" stroke="#e0e818" stroke-width="0.6"/>
<polyline points="544.2,488.4 544.2,410.6 643.5,369.0" fill="none" stroke="#10107a" stroke-width="1.4" stroke-linejoin="round"/>
<line x1="643.5" y1="369.0" x2="643.5" y2="446.8" stroke="#7070d8" stroke-width="1"/>
<line x1="544.2" y1="488.4" x2="643.5" y2="446.8" stroke="#3030c8" stroke-width="1"/>
<polygon points="643.5,368.4 656.0,385.7 656.0,463.5 643.5,446.2" fill="#a8d828" stroke="#a8d828" stroke-width="0.6"/>
<polygon points="656.0,385.7 662.1,394.2 662.1,472.0 656.0,463.5" fill="#2590b8" stroke="#2590b8" stroke-width="0.6"/>
<polyline points="643.5,368.4 662.1,394.2 662.1,472.0" fill="none" stroke="#10107a" stroke-width="1.4" stroke-linejoin="round"/>
<line x1="643.5" y1="446.2" x2="662.1" y2="472.0" stroke="#3030c8" stroke-width="1"/>
<polygon points="662.1,394.2 683.3,385.7 683.3,463.5 662.1,472.0" fill="#2288c0" stroke="#2288c0" stroke-width="0.6"/>
<polygon points="683.3,385.7 696.2,380.5 696.2,458.3 683.3,463.5" fill="#1f78d0" stroke="#1f78d0" stroke-width="0.6"/>
<polygon points="696.2,380.5 711.0,374.6 711.0,452.4 696.2,458.3" fill="#2590b8" stroke="#2590b8" stroke-width="0.6"/>
<polygon points="711.0,374.6 718.5,371.6 718.5,449.4 711.0,452.4" fill="#1f78d0" stroke="#1f78d0" stroke-width="0.6"/>
<polyline points="662.1,472.0 662.1,394.2 718.5,371.6" fill="none" stroke="#10107a" stroke-width="1.4" stroke-linejoin="round"/>
<line x1="718.5" y1="371.6" x2="718.5" y2="449.4" stroke="#7070d8" stroke-width="1"/>
<line x1="662.1" y1="472.0" x2="718.5" y2="449.4" stroke="#3030c8" stroke-width="1"/>
<polygon points="438.0,406.1 450.2,422.6 450.2,501.2 438.0,484.7" fill="#1e77cc" stroke="#1e77cc" stroke-width="0.6"/>
<polygon points="450.2,422.6 454.2,428.0 454.2,506.6 450.2,501.2" fill="#1f6ad8" stroke="#1f6ad8" stroke-width="0.6"/>
<polygon points="454.2,428.0 465.5,443.2 465.5,521.8 454.2,506.6" fill="#2590b8" stroke="#2590b8" stroke-width="0.6"/>
<polyline points="438.0,484.7 438.0,406.1 465.5,443.2 465.5,521.8" fill="none" stroke="#10107a" stroke-width="1.4" stroke-linejoin="round"/>
<line x1="438.0" y1="484.7" x2="465.5" y2="521.8" stroke="#3030c8" stroke-width="1"/>
<polygon points="465.5,443.2 476.0,439.2 476.0,516.5 465.5,520.5" fill="#5ec832" stroke="#5ec832" stroke-width="0.6"/>
<polygon points="476.0,439.2 478.9,438.1 478.9,515.4 476.0,516.5" fill="#80d020" stroke="#80d020" stroke-width="0.6"/>
<polygon points="478.9,438.1 484.8,435.8 484.8,513.1 478.9,515.4" fill="#ffee00" stroke="#ffee00" stroke-width="0.6"/>
<polygon points="484.8,435.8 498.7,430.5 498.7,507.8 484.8,513.1" fill="#e8ef14" stroke="#e8ef14" stroke-width="0.6"/>
<polyline points="465.5,520.5 465.5,443.2 498.7,430.5" fill="none" stroke="#10107a" stroke-width="1.4" stroke-linejoin="round"/>
<line x1="498.7" y1="430.5" x2="498.7" y2="507.8" stroke="#7070d8" stroke-width="1"/>
<line x1="465.5" y1="520.5" x2="498.7" y2="507.8" stroke="#3030c8" stroke-width="1"/>
<line x1="465.5" y1="0" x2="465.5" y2="521.0" stroke="#3a3aff" stroke-width="1.2"/>
</svg>
<div class="a" style="left:4px;top:517px;font-weight:bold;color:#111">Axial load n (per length unit) for Dynamic SLV 1 ex+ ey+:</div>
<div class="a" style="left:4px;top:534px;width:1411px;height:14px;background:linear-gradient(90deg,#0000ff 0%,#33cc33 20.5%,#ffff00 39.6%,#ff8000 60.7%,#ff0000 79.4%,#ee82ee 100%)"></div>
<div class="a" style="left:4px;top:548px;width:2px;height:8px;background:#111"></div>
<div class="a" style="left:474px;top:548px;width:2px;height:8px;background:#111"></div>
<div class="a" style="left:944px;top:548px;width:2px;height:8px;background:#111"></div>
<div class="a" style="left:1413px;top:548px;width:2px;height:8px;background:#111"></div>
<div class="a" style="left:4px;top:559px;color:#222">1.10 kN/m</div>
<div class="a" style="left:474px;top:559px;color:#222">40.02 kN/m</div>
<div class="a" style="left:945px;top:559px;color:#222">78.95 kN/m</div>
<div class="a" style="left:1215px;width:200px;text-align:right;top:559px;color:#222">117.87 kN/m</div>
<svg class="a" style="left:1440px;top:17px" width="45" height="30"><path d="M6.4 15.4 C13 3.1, 32.3 3.1, 38.9 15.4 C32.3 27.7, 13 27.7, 6.4 15.4 Z" fill="#fff" stroke="#333" stroke-width="2.2" stroke-linejoin="round"/><circle cx="22.6" cy="15.5" r="7.3" fill="#7098e8" stroke="#333" stroke-width="1.2"/><path d="M19.3 15.3 Q19.6 12.3 22.6 11.4" stroke="#333" stroke-width="1.2" fill="none"/></svg>
<svg class="a" style="left:1420px;top:513px" width="70" height="65"><ellipse cx="35.5" cy="37.5" rx="25.4" ry="21.8" fill="none" stroke="#bababa" stroke-width="6.2"/><polygon points="18,14.5 39.5,6.7 53.3,21.9 29.2,32.1" fill="#8080ff"/><polygon points="18,14.5 29.2,32.1 30.2,46.3 19.3,27" fill="#ff8080"/><polygon points="29.2,32.1 53.3,21.9 50.8,37 30.2,46.3" fill="#80c080"/><path d="M28.6 16.1 Q30 25 34.7 23.8 Q39.5 22 38.6 13.2" stroke="#eef" stroke-width="1.3" fill="none"/><path d="M37.9 40.2 L39.8 31.5 Q44.3 30.5 45 32.8 Q45 35.3 41.1 35.3 L45 37.9" stroke="#eef" stroke-width="1.2" fill="none"/></svg>
</div>
<div id="split"></div>
<div id="panel">
<div class="a" style="left:0;top:0;width:419px;height:28px;background:#dfe8f3"></div>
<div class="a" style="left:5px;top:7px;font-weight:bold;color:#111">Select view</div>
<div class="a" style="left:0;top:52px;width:419px;height:3px;background:#e3ebf4"></div>
<svg class="a" style="left:6px;top:33px" width="13" height="13"><circle cx="6.5" cy="6.5" r="5.7" fill="#fff" stroke="#333" stroke-width="1"/><circle cx="6.5" cy="6.5" r="3" fill="#222"/></svg>
<div class="a" style="left:24px;top:33px;color:#222">Invisible elements</div>
<svg class="a" style="left:130px;top:33px" width="13" height="13"><circle cx="6.5" cy="6.5" r="5.7" fill="#fff" stroke="#333" stroke-width="1"/></svg>
<div class="a" style="left:148px;top:33px;color:#222">Transparent elements</div>
<div class="a" style="left:22px;top:72px;width:13px;height:13px;border:1px solid #505050;background:#fff"></div>
<div class="a" style="left:42px;top:73px;color:#222">Selection</div>
<div class="a" style="left:20px;top:92px;width:135px;height:26px;background:#0078d7"></div>
<svg class="a" style="left:8px;top:101px" width="6" height="6"><path d="M6 0 L6 6 L0 6z" fill="#404040"/></svg>
<div class="a" style="left:22px;top:98px;width:13px;height:13px;border:1px solid #505050;background:#fff"></div>
<div class="a" style="left:24px;top:101px;width:8px;height:7px;background:#222"></div>
<div class="a" style="left:42px;top:99px;color:#fff">View selection filters</div>
<svg class="a" style="left:27px;top:127px" width="6" height="6"><path d="M6 0 L6 6 L0 6z" fill="#404040"/></svg>
<div class="a" style="left:41px;top:124px;width:13px;height:13px;border:1px solid #505050;background:#fff"></div>
<div class="a" style="left:43px;top:127px;width:8px;height:7px;background:#222"></div>
<div class="a" style="left:61px;top:125px;color:#222">Elements</div>
<div class="a" style="left:60px;top:150px;width:13px;height:13px;border:1px solid #505050;background:#fff"></div>
<svg class="a" style="left:60px;top:150px" width="13" height="13"><path d="M2.6 6.6 L5.3 9.4 L10.4 2.8" stroke="#222" stroke-width="1.7" fill="none"/></svg>
<div class="a" style="left:80px;top:151px;color:#222">Wall</div>
<div class="a" style="left:60px;top:176px;width:13px;height:13px;border:1px solid #505050;background:#fff"></div>
<div class="a" style="left:80px;top:177px;color:#222">Column</div>
<div class="a" style="left:60px;top:202px;width:13px;height:13px;border:1px solid #505050;background:#fff"></div>
<div class="a" style="left:80px;top:203px;color:#222">Floor</div>
<div class="a" style="left:60px;top:228px;width:13px;height:13px;border:1px solid #505050;background:#fff"></div>
<div class="a" style="left:80px;top:229px;color:#222">Beam</div>
<div class="a" style="left:60px;top:254px;width:13px;height:13px;border:1px solid #505050;background:#fff"></div>
<div class="a" style="left:80px;top:255px;color:#222">Foundation</div>
<div class="a" style="left:60px;top:280px;width:13px;height:13px;border:1px solid #505050;background:#fff"></div>
<div class="a" style="left:80px;top:281px;color:#222">load area</div>
<div class="a" style="left:60px;top:306px;width:13px;height:13px;border:1px solid #505050;background:#fff"></div>
<div class="a" style="left:80px;top:307px;color:#222">Line</div>
<div class="a" style="left:60px;top:332px;width:13px;height:13px;border:1px solid #505050;background:#fff"></div>
<div class="a" style="left:80px;top:333px;color:#222">Grid</div>
<svg class="a" style="left:27px;top:361px" width="6" height="6"><path d="M6 0 L6 6 L0 6z" fill="#404040"/></svg>
<div class="a" style="left:41px;top:358px;width:13px;height:13px;border:1px solid #505050;background:#fff"></div>
<div class="a" style="left:43px;top:361px;width:8px;height:7px;background:#222"></div>
<div class="a" style="left:61px;top:359px;color:#222">View selection height</div>
<div class="a" style="left:60px;top:384px;width:13px;height:13px;border:1px solid #505050;background:#fff"></div>
<div class="a" style="left:80px;top:385px;color:#222">Current floor</div>
<div class="a" style="left:60px;top:409px;width:13px;height:13px;border:1px solid #505050;background:#fff"></div>
<svg class="a" style="left:60px;top:409px" width="13" height="13"><path d="M2.6 6.6 L5.3 9.4 L10.4 2.8" stroke="#222" stroke-width="1.7" fill="none"/></svg>
<div class="a" style="left:80px;top:410px;color:#222">h: 0</div>
<div class="a" style="left:60px;top:435px;width:13px;height:13px;border:1px solid #505050;background:#fff"></div>
<div class="a" style="left:80px;top:436px;color:#222">h: 3</div>
<div class="a" style="left:60px;top:461px;width:13px;height:13px;border:1px solid #505050;background:#fff"></div>
<div class="a" style="left:80px;top:462px;color:#222">h: 6</div>
<div class="a" style="left:60px;top:487px;width:13px;height:13px;border:1px solid #505050;background:#fff"></div>
<div class="a" style="left:80px;top:488px;color:#222">h: 7</div>
<svg class="a" style="left:27px;top:516px" width="6" height="6"><path d="M6 0 L6 6 L0 6z" fill="#404040"/></svg>
<div class="a" style="left:41px;top:513px;width:13px;height:13px;border:1px solid #505050;background:#fff"></div>
<svg class="a" style="left:41px;top:513px" width="13" height="13"><path d="M2.6 6.6 L5.3 9.4 L10.4 2.8" stroke="#222" stroke-width="1.7" fill="none"/></svg>
<div class="a" style="left:61px;top:514px;color:#222">Group</div>
<div class="a" style="left:60px;top:539px;width:13px;height:13px;border:1px solid #505050;background:#fff"></div>
<svg class="a" style="left:60px;top:539px" width="13" height="13"><path d="M2.6 6.6 L5.3 9.4 L10.4 2.8" stroke="#222" stroke-width="1.7" fill="none"/></svg>
<div class="a" style="left:80px;top:540px;color:#222">No group definition</div>
<svg class="a" style="left:120px;top:399px" width="80" height="44"><polygon points="3.5,17 32.7,2.5 32.7,10 64.4,10 64.4,26 32.7,26 32.7,33" transform="translate(0,-1)" fill="none" stroke="#ed1c24" stroke-width="4" stroke-linejoin="miter"/></svg>
<div class="a" style="left:199px;top:385px;width:180px;text-align:center;font-size:18.7px;line-height:21px;color:#ed1c24">Only the results of<br>the elements on<br>the selected level</div>
</div>
<div id="tbl">
<div class="a" style="left:0;top:5px;width:1495px;height:1px;background:#a8a8a8"></div>
<div class="a" style="left:0;top:10px;width:1495px;height:1px;background:#a8a8a8"></div>
<div class="a" style="left:0;top:11px;width:1495px;height:303px;background:#f5f5f5"></div>
<div class="a" style="left:1493px;top:5px;width:1px;height:309px;background:#a8a8a8"></div>
<div class="a" style="left:1490px;top:10px;width:1px;height:304px;background:#a8a8a8"></div>
<div class="a" style="left:0px;top:15px;font-weight:bold;font-size:12px;color:#111">Combination Dynamic SLV 1 ex+ ey+:</div>
<div class="a" style="left:218.5px;top:15px;font-size:12px;letter-spacing:-0.24px;color:#222">G1: 1, G2: 1, Q cat A: 0.3, Q cat H: 0, Snow: 0, Ortho wind: 0, Wind X: 0, Wind Y: 0, Dynamic SLV X: 1, Dynamic SLV Y: 0.3, Dynamic SLD X: 0, Dynamic SLD Y: 0 (Duration Instantaneous)</div>
<div class="a" style="left:2px;top:33px;width:6px;height:40px;background:#e8e8e8"></div>
<div class="a" style="left:2px;top:73px;width:6px;height:241px;background:#fbfbfb"></div>
<div class="a" style="left:8px;top:33px;width:1462px;height:40px;background:linear-gradient(#ffffff 0%,#ffffff 36%,#f2f3f5 50%,#edeef1 100%)"></div>
<div class="a" style="left:8px;top:33px;width:151px;height:40px;background:linear-gradient(#eff7fb 0%,#eff7fb 36%,#deedf7 50%,#dcecf6 100%);border:1px solid #9fd4f2;border-top:none"></div>
<svg class="a" style="left:79px;top:34px" width="9" height="5"><path d="M0 5 L4.5 0 L9 5z" fill="#8fb8d8"/></svg>
<div class="a" style="left:14px;top:47px;color:#222">Name</div>
<div class="a" style="left:271px;top:33px;width:1px;height:40px;background:#e2e2e2"></div>
<div class="a" style="left:163px;top:47px;color:#222">Stability</div>
<div class="a" style="left:394px;top:33px;width:1px;height:40px;background:#e2e2e2"></div>
<div class="a" style="left:276px;top:47px;color:#222">Support compression</div>
<div class="a" style="left:471px;top:33px;width:1px;height:40px;background:#e2e2e2"></div>
<div class="a" style="left:399px;top:47px;color:#222">Shear</div>
<div class="a" style="left:574px;top:33px;width:1px;height:40px;background:#e2e2e2"></div>
<div class="a" style="left:476px;top:47px;color:#222">Shear connection</div>
<div class="a" style="left:731px;top:33px;width:1px;height:40px;background:#e2e2e2"></div>
<div class="a" style="left:579px;top:47px;color:#222">Connection for tensile force</div>
<div class="a" style="left:825px;top:33px;width:1px;height:40px;background:#e2e2e2"></div>
<div class="a" style="left:737px;top:39px;line-height:16px;color:#222">N<br>[kN]</div>
<div class="a" style="left:919px;top:33px;width:1px;height:40px;background:#e2e2e2"></div>
<div class="a" style="left:831px;top:39px;line-height:16px;color:#222">n<br>[kN/m]</div>
<div class="a" style="left:976px;top:33px;width:1px;height:40px;background:#e2e2e2"></div>
<div class="a" style="left:925px;top:39px;line-height:16px;color:#222">M3-3<br>[kNm]</div>
<div class="a" style="left:1028px;top:33px;width:1px;height:40px;background:#e2e2e2"></div>
<div class="a" style="left:982px;top:39px;line-height:16px;color:#222">m3-3<br>[kN]</div>
<div class="a" style="left:1080px;top:33px;width:1px;height:40px;background:#e2e2e2"></div>
<div class="a" style="left:1034px;top:39px;line-height:16px;color:#222">V2<br>[kN]</div>
<div class="a" style="left:1128px;top:33px;width:1px;height:40px;background:#e2e2e2"></div>
<div class="a" style="left:1086px;top:39px;line-height:16px;color:#222">v2<br>[kN/m]</div>
<div class="a" style="left:1172px;top:33px;width:1px;height:40px;background:#e2e2e2"></div>
<div class="a" style="left:1134px;top:39px;line-height:16px;color:#222">Va<br>[kN]</div>
<div class="a" style="left:1224px;top:33px;width:1px;height:40px;background:#e2e2e2"></div>
<div class="a" style="left:1178px;top:39px;line-height:16px;color:#222">Ta<br>[kN]</div>
<div class="a" style="left:1268px;top:33px;width:1px;height:40px;background:#e2e2e2"></div>
<div class="a" style="left:1230px;top:39px;line-height:16px;color:#222">dr<br>[mm]</div>
<div class="a" style="left:1314px;top:33px;width:1px;height:40px;background:#e2e2e2"></div>
<div class="a" style="left:1274px;top:39px;line-height:16px;color:#222">Ux<br>[mm]</div>
<div class="a" style="left:1359px;top:33px;width:1px;height:40px;background:#e2e2e2"></div>
<div class="a" style="left:1320px;top:39px;line-height:16px;color:#222">Uy<br>[mm]</div>
<div class="a" style="left:8px;top:73px;width:1462px;height:241px;background:#f5f5f5"></div>
<div class="a" style="left:8px;top:101px;width:1462px;height:1px;background:#111"></div>
<div class="a" style="left:14px;top:80.5px;color:#222">Wall 1</div>
<svg class="a" style="left:161px;top:80px" width="14" height="14"><circle cx="6.7" cy="6.6" r="6.3" fill="#2f9e41"/><path d="M3.5 6.9 L5.8 9.4 L10 4.2" stroke="#fff" stroke-width="1.9" fill="none"/></svg>
<div class="a" style="left:158px;top:80.5px;width:107px;text-align:right;color:#222">13.50%</div>
<svg class="a" style="left:274px;top:80px" width="14" height="14"><circle cx="6.7" cy="6.6" r="6.3" fill="#2f9e41"/><path d="M3.5 6.9 L5.8 9.4 L10 4.2" stroke="#fff" stroke-width="1.9" fill="none"/></svg>
<div class="a" style="left:271px;top:80.5px;width:117px;text-align:right;color:#222">14.62%</div>
<svg class="a" style="left:397px;top:80px" width="14" height="14"><circle cx="6.7" cy="6.6" r="6.3" fill="#2f9e41"/><path d="M3.5 6.9 L5.8 9.4 L10 4.2" stroke="#fff" stroke-width="1.9" fill="none"/></svg>
<div class="a" style="left:394px;top:80.5px;width:69px;text-align:right;color:#222">3.57%</div>
<svg class="a" style="left:474px;top:80px" width="14" height="14"><circle cx="6.7" cy="6.6" r="6.3" fill="#2f9e41"/><path d="M3.5 6.9 L5.8 9.4 L10 4.2" stroke="#fff" stroke-width="1.9" fill="none"/></svg>
<div class="a" style="left:471px;top:80.5px;width:97px;text-align:right;color:#222">9.68%</div>
<svg class="a" style="left:577px;top:80px" width="14" height="14"><circle cx="6.7" cy="6.6" r="6.3" fill="#2f9e41"/><path d="M3.5 6.9 L5.8 9.4 L10 4.2" stroke="#fff" stroke-width="1.9" fill="none"/></svg>
<div class="a" style="left:574px;top:80.5px;width:149px;text-align:right;color:#222">11.53%</div>
<div class="a" style="left:731px;top:80.5px;width:87px;text-align:right;color:#222">38.25</div>
<div class="a" style="left:825px;top:80.5px;width:87px;text-align:right;color:#222">38.25</div>
<div class="a" style="left:919px;top:80.5px;width:51px;text-align:right;color:#222">21.54</div>
<div class="a" style="left:976px;top:80.5px;width:45px;text-align:right;color:#222">21.54</div>
<div class="a" style="left:1028px;top:80.5px;width:45px;text-align:right;color:#222">3.94</div>
<div class="a" style="left:1080px;top:80.5px;width:41px;text-align:right;color:#222">3.94</div>
<div class="a" style="left:1128px;top:80.5px;width:38px;text-align:right;color:#222">1.97</div>
<div class="a" style="left:1172px;top:80.5px;width:44px;text-align:right;color:#222">2.41</div>
<div class="a" style="left:1224px;top:80.5px;width:38px;text-align:right;color:#222">1.88</div>
<div class="a" style="left:1268px;top:80.5px;width:38px;text-align:right;color:#222">1.88</div>
<div class="a" style="left:1314px;top:80.5px;width:39px;text-align:right;color:#222">2.03</div>
<div class="a" style="left:8px;top:130px;width:1462px;height:1px;background:#111"></div>
<div class="a" style="left:14px;top:109.3px;color:#222">Wall 10</div>
<svg class="a" style="left:161px;top:109px" width="14" height="14"><circle cx="6.7" cy="6.6" r="6.3" fill="#2f9e41"/><path d="M3.5 6.9 L5.8 9.4 L10 4.2" stroke="#fff" stroke-width="1.9" fill="none"/></svg>
<div class="a" style="left:158px;top:109.3px;width:107px;text-align:right;color:#222">9.22%</div>
<svg class="a" style="left:274px;top:109px" width="14" height="14"><circle cx="6.7" cy="6.6" r="6.3" fill="#2f9e41"/><path d="M3.5 6.9 L5.8 9.4 L10 4.2" stroke="#fff" stroke-width="1.9" fill="none"/></svg>
<div class="a" style="left:271px;top:109.3px;width:117px;text-align:right;color:#222">9.98%</div>
<svg class="a" style="left:397px;top:109px" width="14" height="14"><circle cx="6.7" cy="6.6" r="6.3" fill="#2f9e41"/><path d="M3.5 6.9 L5.8 9.4 L10 4.2" stroke="#fff" stroke-width="1.9" fill="none"/></svg>
<div class="a" style="left:394px;top:109.3px;width:69px;text-align:right;color:#222">6.88%</div>
<svg class="a" style="left:474px;top:109px" width="14" height="14"><circle cx="6.7" cy="6.6" r="6.3" fill="#2f9e41"/><path d="M3.5 6.9 L5.8 9.4 L10 4.2" stroke="#fff" stroke-width="1.9" fill="none"/></svg>
<div class="a" style="left:471px;top:109.3px;width:97px;text-align:right;color:#222">42.62%</div>
<svg class="a" style="left:577px;top:109px" width="14" height="14"><circle cx="6.7" cy="6.6" r="6.3" fill="#2f9e41"/><path d="M3.5 6.9 L5.8 9.4 L10 4.2" stroke="#fff" stroke-width="1.9" fill="none"/></svg>
<div class="a" style="left:574px;top:109.3px;width:149px;text-align:right;color:#222">18.95%</div>
<div class="a" style="left:731px;top:109.3px;width:87px;text-align:right;color:#222">25.95</div>
<div class="a" style="left:825px;top:109.3px;width:87px;text-align:right;color:#222">25.95</div>
<div class="a" style="left:919px;top:109.3px;width:51px;text-align:right;color:#222">31.27</div>
<div class="a" style="left:976px;top:109.3px;width:45px;text-align:right;color:#222">31.27</div>
<div class="a" style="left:1028px;top:109.3px;width:45px;text-align:right;color:#222">7.59</div>
<div class="a" style="left:1080px;top:109.3px;width:41px;text-align:right;color:#222">7.59</div>
<div class="a" style="left:1128px;top:109.3px;width:38px;text-align:right;color:#222">2.53</div>
<div class="a" style="left:1172px;top:109.3px;width:44px;text-align:right;color:#222">9.15</div>
<div class="a" style="left:1224px;top:109.3px;width:38px;text-align:right;color:#222">1.58</div>
<div class="a" style="left:1268px;top:109.3px;width:38px;text-align:right;color:#222">1.93</div>
<div class="a" style="left:1314px;top:109.3px;width:39px;text-align:right;color:#222">1.58</div>
<div class="a" style="left:8px;top:159px;width:1462px;height:1px;background:#111"></div>
<div class="a" style="left:14px;top:138.2px;color:#222">Wall 11</div>
<svg class="a" style="left:161px;top:138px" width="14" height="14"><circle cx="6.7" cy="6.6" r="6.3" fill="#2f9e41"/><path d="M3.5 6.9 L5.8 9.4 L10 4.2" stroke="#fff" stroke-width="1.9" fill="none"/></svg>
<div class="a" style="left:158px;top:138.2px;width:107px;text-align:right;color:#222">6.27%</div>
<svg class="a" style="left:274px;top:138px" width="14" height="14"><circle cx="6.7" cy="6.6" r="6.3" fill="#2f9e41"/><path d="M3.5 6.9 L5.8 9.4 L10 4.2" stroke="#fff" stroke-width="1.9" fill="none"/></svg>
<div class="a" style="left:271px;top:138.2px;width:117px;text-align:right;color:#222">6.79%</div>
<svg class="a" style="left:397px;top:138px" width="14" height="14"><circle cx="6.7" cy="6.6" r="6.3" fill="#2f9e41"/><path d="M3.5 6.9 L5.8 9.4 L10 4.2" stroke="#fff" stroke-width="1.9" fill="none"/></svg>
<div class="a" style="left:394px;top:138.2px;width:69px;text-align:right;color:#222">36.24%</div>
<svg class="a" style="left:474px;top:138px" width="14" height="14"><circle cx="6.7" cy="6.6" r="6.3" fill="#2f9e41"/><path d="M3.5 6.9 L5.8 9.4 L10 4.2" stroke="#fff" stroke-width="1.9" fill="none"/></svg>
<div class="a" style="left:471px;top:138.2px;width:97px;text-align:right;color:#222">9.91%</div>
<svg class="a" style="left:577px;top:138px" width="14" height="14"><circle cx="6.7" cy="6.6" r="6.3" fill="#2f9e41"/><path d="M3.5 6.9 L5.8 9.4 L10 4.2" stroke="#fff" stroke-width="1.9" fill="none"/></svg>
<div class="a" style="left:574px;top:138.2px;width:149px;text-align:right;color:#222">10.49%</div>
<div class="a" style="left:731px;top:138.2px;width:87px;text-align:right;color:#222">31.06</div>
<div class="a" style="left:825px;top:138.2px;width:87px;text-align:right;color:#222">11.09</div>
<div class="a" style="left:919px;top:138.2px;width:51px;text-align:right;color:#222">83.51</div>
<div class="a" style="left:976px;top:138.2px;width:45px;text-align:right;color:#222">29.83</div>
<div class="a" style="left:1028px;top:138.2px;width:45px;text-align:right;color:#222">13.78</div>
<div class="a" style="left:1080px;top:138.2px;width:41px;text-align:right;color:#222">4.92</div>
<div class="a" style="left:1128px;top:138.2px;width:38px;text-align:right;color:#222">2.76</div>
<div class="a" style="left:1172px;top:138.2px;width:44px;text-align:right;color:#222">7.15</div>
<div class="a" style="left:1224px;top:138.2px;width:38px;text-align:right;color:#222">1.58</div>
<div class="a" style="left:1268px;top:138.2px;width:38px;text-align:right;color:#222">1.76</div>
<div class="a" style="left:1314px;top:138.2px;width:39px;text-align:right;color:#222">1.58</div>
<div class="a" style="left:8px;top:187px;width:1462px;height:1px;background:#111"></div>
<div class="a" style="left:14px;top:167.0px;color:#222">Wall 12</div>
<svg class="a" style="left:161px;top:166px" width="14" height="14"><circle cx="6.7" cy="6.6" r="6.3" fill="#2f9e41"/><path d="M3.5 6.9 L5.8 9.4 L10 4.2" stroke="#fff" stroke-width="1.9" fill="none"/></svg>
<div class="a" style="left:158px;top:167.0px;width:107px;text-align:right;color:#222">35.12%</div>
<svg class="a" style="left:274px;top:166px" width="14" height="14"><circle cx="6.7" cy="6.6" r="6.3" fill="#2f9e41"/><path d="M3.5 6.9 L5.8 9.4 L10 4.2" stroke="#fff" stroke-width="1.9" fill="none"/></svg>
<div class="a" style="left:271px;top:167.0px;width:117px;text-align:right;color:#222">38.03%</div>
<svg class="a" style="left:397px;top:166px" width="14" height="14"><circle cx="6.7" cy="6.6" r="6.3" fill="#2f9e41"/><path d="M3.5 6.9 L5.8 9.4 L10 4.2" stroke="#fff" stroke-width="1.9" fill="none"/></svg>
<div class="a" style="left:394px;top:167.0px;width:69px;text-align:right;color:#222">33.33%</div>
<svg class="a" style="left:474px;top:166px" width="14" height="14"><circle cx="6.7" cy="6.6" r="6.3" fill="#2f9e41"/><path d="M3.5 6.9 L5.8 9.4 L10 4.2" stroke="#fff" stroke-width="1.9" fill="none"/></svg>
<div class="a" style="left:471px;top:167.0px;width:97px;text-align:right;color:#222">11.13%</div>
<svg class="a" style="left:577px;top:166px" width="14" height="14"><circle cx="6.7" cy="6.6" r="6.3" fill="#2f9e41"/><path d="M3.5 6.9 L5.8 9.4 L10 4.2" stroke="#fff" stroke-width="1.9" fill="none"/></svg>
<div class="a" style="left:574px;top:167.0px;width:149px;text-align:right;color:#222">0.00%</div>
<div class="a" style="left:731px;top:167.0px;width:87px;text-align:right;color:#222">166.46</div>
<div class="a" style="left:825px;top:167.0px;width:87px;text-align:right;color:#222">66.59</div>
<div class="a" style="left:919px;top:167.0px;width:51px;text-align:right;color:#222">54.02</div>
<div class="a" style="left:976px;top:167.0px;width:45px;text-align:right;color:#222">21.61</div>
<div class="a" style="left:1028px;top:167.0px;width:45px;text-align:right;color:#222">11.31</div>
<div class="a" style="left:1080px;top:167.0px;width:41px;text-align:right;color:#222">4.52</div>
<div class="a" style="left:1128px;top:167.0px;width:38px;text-align:right;color:#222">2.26</div>
<div class="a" style="left:1172px;top:167.0px;width:44px;text-align:right;color:#222">0.00</div>
<div class="a" style="left:1224px;top:167.0px;width:38px;text-align:right;color:#222">1.59</div>
<div class="a" style="left:1268px;top:167.0px;width:38px;text-align:right;color:#222">1.59</div>
<div class="a" style="left:1314px;top:167.0px;width:39px;text-align:right;color:#222">1.31</div>
<div class="a" style="left:8px;top:216px;width:1462px;height:1px;background:#111"></div>
<div class="a" style="left:14px;top:195.8px;color:#222">Wall 13</div>
<svg class="a" style="left:161px;top:195px" width="14" height="14"><circle cx="6.7" cy="6.6" r="6.3" fill="#2f9e41"/><path d="M3.5 6.9 L5.8 9.4 L10 4.2" stroke="#fff" stroke-width="1.9" fill="none"/></svg>
<div class="a" style="left:158px;top:195.8px;width:107px;text-align:right;color:#222">3.91%</div>
<svg class="a" style="left:274px;top:195px" width="14" height="14"><circle cx="6.7" cy="6.6" r="6.3" fill="#2f9e41"/><path d="M3.5 6.9 L5.8 9.4 L10 4.2" stroke="#fff" stroke-width="1.9" fill="none"/></svg>
<div class="a" style="left:271px;top:195.8px;width:117px;text-align:right;color:#222">4.24%</div>
<svg class="a" style="left:397px;top:195px" width="14" height="14"><circle cx="6.7" cy="6.6" r="6.3" fill="#2f9e41"/><path d="M3.5 6.9 L5.8 9.4 L10 4.2" stroke="#fff" stroke-width="1.9" fill="none"/></svg>
<div class="a" style="left:394px;top:195.8px;width:69px;text-align:right;color:#222">35.79%</div>
<svg class="a" style="left:474px;top:195px" width="14" height="14"><circle cx="6.7" cy="6.6" r="6.3" fill="#2f9e41"/><path d="M3.5 6.9 L5.8 9.4 L10 4.2" stroke="#fff" stroke-width="1.9" fill="none"/></svg>
<div class="a" style="left:471px;top:195.8px;width:97px;text-align:right;color:#222">18.69%</div>
<svg class="a" style="left:577px;top:195px" width="14" height="14"><circle cx="6.7" cy="6.6" r="6.3" fill="#2f9e41"/><path d="M3.5 6.9 L5.8 9.4 L10 4.2" stroke="#fff" stroke-width="1.9" fill="none"/></svg>
<div class="a" style="left:574px;top:195.8px;width:149px;text-align:right;color:#222">34.96%</div>
<div class="a" style="left:731px;top:195.8px;width:87px;text-align:right;color:#222">18.70</div>
<div class="a" style="left:825px;top:195.8px;width:87px;text-align:right;color:#222">11.00</div>
<div class="a" style="left:919px;top:195.8px;width:51px;text-align:right;color:#222">44.59</div>
<div class="a" style="left:976px;top:195.8px;width:45px;text-align:right;color:#222">26.23</div>
<div class="a" style="left:1028px;top:195.8px;width:45px;text-align:right;color:#222">8.26</div>
<div class="a" style="left:1080px;top:195.8px;width:41px;text-align:right;color:#222">4.86</div>
<div class="a" style="left:1128px;top:195.8px;width:38px;text-align:right;color:#222">2.75</div>
<div class="a" style="left:1172px;top:195.8px;width:44px;text-align:right;color:#222">16.88</div>
<div class="a" style="left:1224px;top:195.8px;width:38px;text-align:right;color:#222">1.97</div>
<div class="a" style="left:1268px;top:195.8px;width:38px;text-align:right;color:#222">1.97</div>
<div class="a" style="left:1314px;top:195.8px;width:39px;text-align:right;color:#222">1.29</div>
<div class="a" style="left:8px;top:245px;width:1462px;height:1px;background:#111"></div>
<div class="a" style="left:14px;top:224.6px;color:#222">Wall 14</div>
<svg class="a" style="left:161px;top:224px" width="14" height="14"><circle cx="6.7" cy="6.6" r="6.3" fill="#2f9e41"/><path d="M3.5 6.9 L5.8 9.4 L10 4.2" stroke="#fff" stroke-width="1.9" fill="none"/></svg>
<div class="a" style="left:158px;top:224.6px;width:107px;text-align:right;color:#222">12.41%</div>
<svg class="a" style="left:274px;top:224px" width="14" height="14"><circle cx="6.7" cy="6.6" r="6.3" fill="#2f9e41"/><path d="M3.5 6.9 L5.8 9.4 L10 4.2" stroke="#fff" stroke-width="1.9" fill="none"/></svg>
<div class="a" style="left:271px;top:224.6px;width:117px;text-align:right;color:#222">13.44%</div>
<svg class="a" style="left:397px;top:224px" width="14" height="14"><circle cx="6.7" cy="6.6" r="6.3" fill="#2f9e41"/><path d="M3.5 6.9 L5.8 9.4 L10 4.2" stroke="#fff" stroke-width="1.9" fill="none"/></svg>
<div class="a" style="left:394px;top:224.6px;width:69px;text-align:right;color:#222">3.37%</div>
<svg class="a" style="left:474px;top:224px" width="14" height="14"><circle cx="6.7" cy="6.6" r="6.3" fill="#2f9e41"/><path d="M3.5 6.9 L5.8 9.4 L10 4.2" stroke="#fff" stroke-width="1.9" fill="none"/></svg>
<div class="a" style="left:471px;top:224.6px;width:97px;text-align:right;color:#222">12.62%</div>
<svg class="a" style="left:577px;top:224px" width="14" height="14"><circle cx="6.7" cy="6.6" r="6.3" fill="#2f9e41"/><path d="M3.5 6.9 L5.8 9.4 L10 4.2" stroke="#fff" stroke-width="1.9" fill="none"/></svg>
<div class="a" style="left:574px;top:224.6px;width:149px;text-align:right;color:#222">4.12%</div>
<div class="a" style="left:731px;top:224.6px;width:87px;text-align:right;color:#222">34.89</div>
<div class="a" style="left:825px;top:224.6px;width:87px;text-align:right;color:#222">34.89</div>
<div class="a" style="left:919px;top:224.6px;width:51px;text-align:right;color:#222">19.43</div>
<div class="a" style="left:976px;top:224.6px;width:45px;text-align:right;color:#222">19.43</div>
<div class="a" style="left:1028px;top:224.6px;width:45px;text-align:right;color:#222">3.72</div>
<div class="a" style="left:1080px;top:224.6px;width:41px;text-align:right;color:#222">3.72</div>
<div class="a" style="left:1128px;top:224.6px;width:38px;text-align:right;color:#222">1.86</div>
<div class="a" style="left:1172px;top:224.6px;width:44px;text-align:right;color:#222">1.99</div>
<div class="a" style="left:1224px;top:224.6px;width:38px;text-align:right;color:#222">1.27</div>
<div class="a" style="left:1268px;top:224.6px;width:38px;text-align:right;color:#222">1.93</div>
<div class="a" style="left:1314px;top:224.6px;width:39px;text-align:right;color:#222">1.27</div>
<div class="a" style="left:8px;top:274px;width:1462px;height:1px;background:#111"></div>
<div class="a" style="left:14px;top:253.5px;color:#222">Wall 15</div>
<svg class="a" style="left:161px;top:253px" width="14" height="14"><circle cx="6.7" cy="6.6" r="6.3" fill="#2f9e41"/><path d="M3.5 6.9 L5.8 9.4 L10 4.2" stroke="#fff" stroke-width="1.9" fill="none"/></svg>
<div class="a" style="left:158px;top:253.5px;width:107px;text-align:right;color:#222">15.41%</div>
<svg class="a" style="left:274px;top:253px" width="14" height="14"><circle cx="6.7" cy="6.6" r="6.3" fill="#2f9e41"/><path d="M3.5 6.9 L5.8 9.4 L10 4.2" stroke="#fff" stroke-width="1.9" fill="none"/></svg>
<div class="a" style="left:271px;top:253.5px;width:117px;text-align:right;color:#222">16.68%</div>
<svg class="a" style="left:397px;top:253px" width="14" height="14"><circle cx="6.7" cy="6.6" r="6.3" fill="#2f9e41"/><path d="M3.5 6.9 L5.8 9.4 L10 4.2" stroke="#fff" stroke-width="1.9" fill="none"/></svg>
<div class="a" style="left:394px;top:253.5px;width:69px;text-align:right;color:#222">34.26%</div>
<svg class="a" style="left:474px;top:253px" width="14" height="14"><circle cx="6.7" cy="6.6" r="6.3" fill="#2f9e41"/><path d="M3.5 6.9 L5.8 9.4 L10 4.2" stroke="#fff" stroke-width="1.9" fill="none"/></svg>
<div class="a" style="left:471px;top:253.5px;width:97px;text-align:right;color:#222">11.44%</div>
<svg class="a" style="left:577px;top:253px" width="14" height="14"><circle cx="6.7" cy="6.6" r="6.3" fill="#2f9e41"/><path d="M3.5 6.9 L5.8 9.4 L10 4.2" stroke="#fff" stroke-width="1.9" fill="none"/></svg>
<div class="a" style="left:574px;top:253.5px;width:149px;text-align:right;color:#222">0.00%</div>
<div class="a" style="left:731px;top:253.5px;width:87px;text-align:right;color:#222">90.42</div>
<div class="a" style="left:825px;top:253.5px;width:87px;text-align:right;color:#222">30.14</div>
<div class="a" style="left:919px;top:253.5px;width:51px;text-align:right;color:#222">75.12</div>
<div class="a" style="left:976px;top:253.5px;width:45px;text-align:right;color:#222">25.04</div>
<div class="a" style="left:1028px;top:253.5px;width:45px;text-align:right;color:#222">13.96</div>
<div class="a" style="left:1080px;top:253.5px;width:41px;text-align:right;color:#222">4.65</div>
<div class="a" style="left:1128px;top:253.5px;width:38px;text-align:right;color:#222">2.33</div>
<div class="a" style="left:1172px;top:253.5px;width:44px;text-align:right;color:#222">0.00</div>
<div class="a" style="left:1224px;top:253.5px;width:38px;text-align:right;color:#222">1.88</div>
<div class="a" style="left:1268px;top:253.5px;width:38px;text-align:right;color:#222">1.88</div>
<div class="a" style="left:1314px;top:253.5px;width:39px;text-align:right;color:#222">1.30</div>
<div class="a" style="left:8px;top:303px;width:1462px;height:1px;background:#111"></div>
<div class="a" style="left:14px;top:282.3px;color:#222">Wall 16</div>
<svg class="a" style="left:161px;top:282px" width="14" height="14"><circle cx="6.7" cy="6.6" r="6.3" fill="#2f9e41"/><path d="M3.5 6.9 L5.8 9.4 L10 4.2" stroke="#fff" stroke-width="1.9" fill="none"/></svg>
<div class="a" style="left:158px;top:282.3px;width:107px;text-align:right;color:#222">11.51%</div>
<svg class="a" style="left:274px;top:282px" width="14" height="14"><circle cx="6.7" cy="6.6" r="6.3" fill="#2f9e41"/><path d="M3.5 6.9 L5.8 9.4 L10 4.2" stroke="#fff" stroke-width="1.9" fill="none"/></svg>
<div class="a" style="left:271px;top:282.3px;width:117px;text-align:right;color:#222">12.46%</div>
<svg class="a" style="left:397px;top:282px" width="14" height="14"><circle cx="6.7" cy="6.6" r="6.3" fill="#2f9e41"/><path d="M3.5 6.9 L5.8 9.4 L10 4.2" stroke="#fff" stroke-width="1.9" fill="none"/></svg>
<div class="a" style="left:394px;top:282.3px;width:69px;text-align:right;color:#222">33.73%</div>
<svg class="a" style="left:474px;top:282px" width="14" height="14"><circle cx="6.7" cy="6.6" r="6.3" fill="#2f9e41"/><path d="M3.5 6.9 L5.8 9.4 L10 4.2" stroke="#fff" stroke-width="1.9" fill="none"/></svg>
<div class="a" style="left:471px;top:282.3px;width:97px;text-align:right;color:#222">11.71%</div>
<svg class="a" style="left:577px;top:282px" width="14" height="14"><circle cx="6.7" cy="6.6" r="6.3" fill="#2f9e41"/><path d="M3.5 6.9 L5.8 9.4 L10 4.2" stroke="#fff" stroke-width="1.9" fill="none"/></svg>
<div class="a" style="left:574px;top:282.3px;width:149px;text-align:right;color:#222">0.00%</div>
<div class="a" style="left:731px;top:282.3px;width:87px;text-align:right;color:#222">184.45</div>
<div class="a" style="left:825px;top:282.3px;width:87px;text-align:right;color:#222">23.65</div>
<div class="a" style="left:919px;top:282.3px;width:51px;text-align:right;color:#222">219.51</div>
<div class="a" style="left:976px;top:282.3px;width:45px;text-align:right;color:#222">28.14</div>
<div class="a" style="left:1028px;top:282.3px;width:45px;text-align:right;color:#222">35.72</div>
<div class="a" style="left:1080px;top:282.3px;width:41px;text-align:right;color:#222">4.58</div>
<div class="a" style="left:1128px;top:282.3px;width:38px;text-align:right;color:#222">2.38</div>
<div class="a" style="left:1172px;top:282.3px;width:44px;text-align:right;color:#222">0.00</div>
<div class="a" style="left:1224px;top:282.3px;width:38px;text-align:right;color:#222">1.60</div>
<div class="a" style="left:1268px;top:282.3px;width:38px;text-align:right;color:#222">1.60</div>
<div class="a" style="left:1314px;top:282.3px;width:39px;text-align:right;color:#222">1.38</div>
<div class="a" style="left:8px;top:332px;width:1462px;height:1px;background:#111"></div>
<div class="a" style="left:158px;top:73px;width:1px;height:241px;background:#111"></div>
<div class="a" style="left:271px;top:73px;width:1px;height:241px;background:#111"></div>
<div class="a" style="left:394px;top:73px;width:1px;height:241px;background:#111"></div>
<div class="a" style="left:471px;top:73px;width:1px;height:241px;background:#111"></div>
<div class="a" style="left:574px;top:73px;width:1px;height:241px;background:#111"></div>
<div class="a" style="left:731px;top:73px;width:1px;height:241px;background:#111"></div>
<div class="a" style="left:825px;top:73px;width:1px;height:241px;background:#111"></div>
<div class="a" style="left:919px;top:73px;width:1px;height:241px;background:#111"></div>
<div class="a" style="left:976px;top:73px;width:1px;height:241px;background:#111"></div>
<div class="a" style="left:1028px;top:73px;width:1px;height:241px;background:#111"></div>
<div class="a" style="left:1080px;top:73px;width:1px;height:241px;background:#111"></div>
<div class="a" style="left:1128px;top:73px;width:1px;height:241px;background:#111"></div>
<div class="a" style="left:1172px;top:73px;width:1px;height:241px;background:#111"></div>
<div class="a" style="left:1224px;top:73px;width:1px;height:241px;background:#111"></div>
<div class="a" style="left:1268px;top:73px;width:1px;height:241px;background:#111"></div>
<div class="a" style="left:1314px;top:73px;width:1px;height:241px;background:#111"></div>
<div class="a" style="left:1359px;top:73px;width:1px;height:241px;background:#111"></div>
<div class="a" style="left:8px;top:73px;width:1px;height:241px;background:#111"></div>
<div class="a" style="left:1470px;top:73px;width:18px;height:241px;background:#f0f0f0"></div>
<div class="a" style="left:1470px;top:90px;width:17px;height:82px;background:#cdcdcd"></div>
<svg class="a" style="left:1474px;top:78px" width="10" height="6"><path d="M1 5 L5 1 L9 5" stroke="#a0a0a0" fill="none"/></svg>
<svg class="a" style="left:1474px;top:302px" width="10" height="6"><path d="M1 1 L5 5 L9 1" stroke="#a0a0a0" fill="none"/></svg>
</div>
</body></html>
